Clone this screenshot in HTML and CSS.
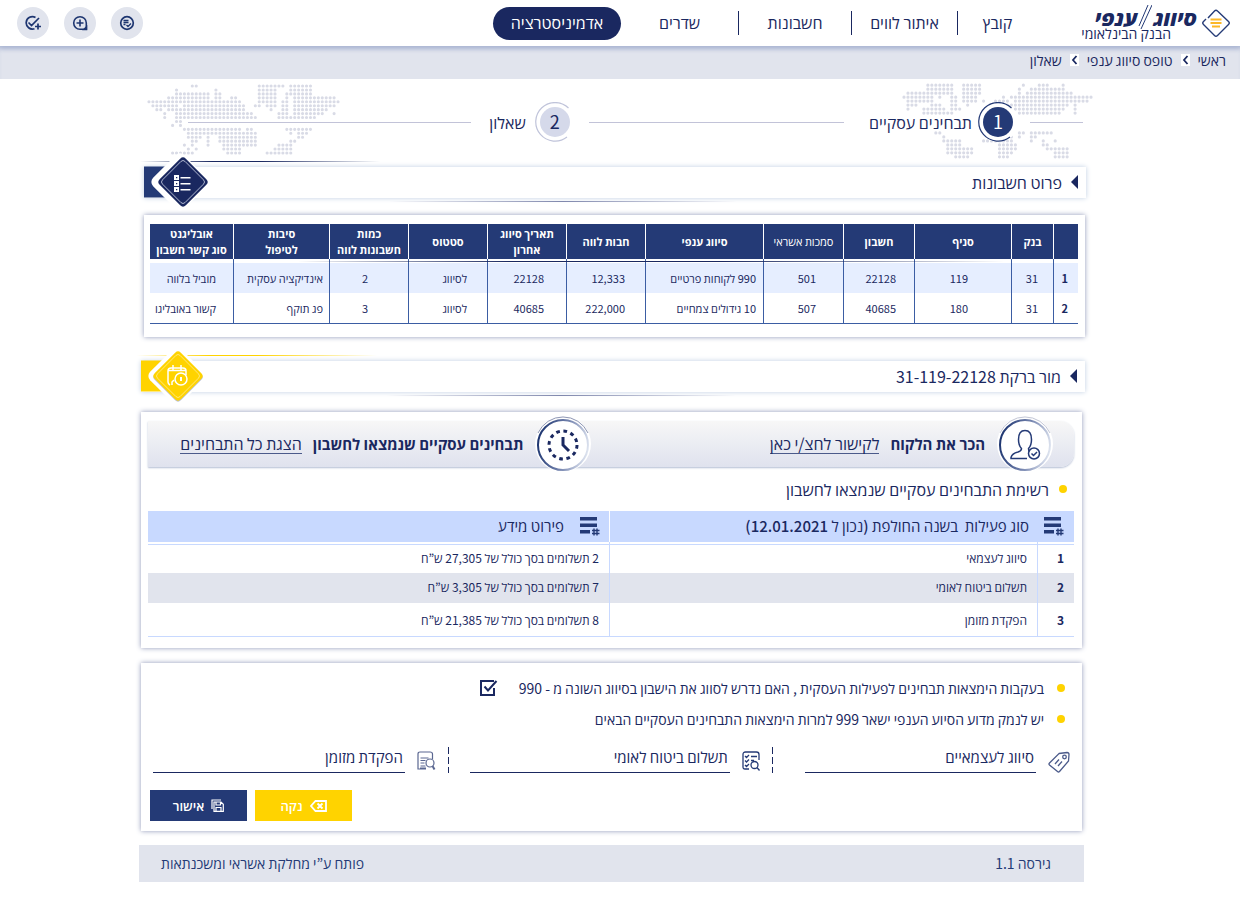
FILE: index.html
```html
<!DOCTYPE html>
<html lang="he" dir="rtl">
<head>
<meta charset="utf-8">
<meta name="viewport" content="width=device-width, initial-scale=1">
<title>סיווג ענפי</title>
<link rel="stylesheet" href="styles.css">
</head>
<body>
<header class="topbar">
  <div class="brand">
    <svg class="brand-mark" width="28" height="30" viewBox="0 0 28 30" fill="none" stroke="#243a76" stroke-width="1.4">
      <path d="M6 10 L12.5 3 Q14 1.500 15.500 3 L26.500 13.500 Q28 15 26.500 16.500 L15.500 27.500 Q14 29 12.500 27.500 L1.500 16.500 Q0 15 1.500 13.500 L4 11"/>
      <path stroke="#fcb827" stroke-width="1.800" d="M8.500 11.500h11M8.500 15h11M10 18.500h8"/>
    </svg>
    <div class="brand-text">
      <div class="brand-name"><span>סיווג</span><svg class="brand-slash" width="14" height="26" viewBox="0 0 14 26" stroke="#243a76" stroke-width="1" fill="none"><path d="M10 1L1 22M14 1L3 25"/></svg><span>ענפי</span></div>
      <div class="brand-sub">הבנק הבינלאומי</div>
    </div>
  </div>
  <nav class="menu">
    <a href="#">קובץ</a>
    <a href="#">איתור לווים</a>
    <a href="#">חשבונות</a>
    <a href="#">שדרים</a>
    <a href="#" class="active">אדמיניסטרציה</a>
  </nav>
  <div class="tools">
    <button type="button" aria-label="רשימה"><svg width="16" height="16" viewBox="0 0 16 16" fill="none" stroke="#1d3570" stroke-width="1.700"><circle cx="8" cy="8" r="6.300"/><path stroke-width="1.300" d="M4.500 5.500h5M4.500 7.500h5M4.500 9.500h2M7.500 10l1.500 1.500 3-3"/></svg></button>
    <button type="button" aria-label="הוספה"><svg width="16" height="16" viewBox="0 0 16 16" fill="none" stroke="#1d3570" stroke-width="1.600"><path d="M8 1.700a6.300 6.300 0 1 0 0 12.600h6.300V8A6.300 6.300 0 0 0 8 1.700zM8 4.500v7M4.500 8h7"/><path d="M14.500 12v2.500H12z" fill="#1d3570"/></svg></button>
    <button type="button" aria-label="אישור והוספה"><svg width="18" height="16" viewBox="0 0 18 16" fill="none" stroke="#1d3570" stroke-width="1.700"><path d="M11.500 2.500A6.200 6.200 0 1 0 10.500 13.700M4.500 7.500L7.500 10.500L15 3M14 8.500v6M11 11.500h6"/></svg></button>
  </div>
</header>
<nav class="crumbs" aria-label="נתיב">
  <a href="#">ראשי</a>
  <svg width="9" height="12" viewBox="0 0 9 12"><path fill="#fff" d="M0 0h9v12H0z"/><path fill="none" stroke="#1a2860" stroke-width="1.800" d="M6.500 2L3 6l3.500 4"/></svg>
  <a href="#">טופס סיווג ענפי</a>
  <svg width="9" height="12" viewBox="0 0 9 12"><path fill="#fff" d="M0 0h9v12H0z"/><path fill="none" stroke="#1a2860" stroke-width="1.800" d="M6.500 2L3 6l3.500 4"/></svg>
  <span>שאלון</span>
</nav>

<main class="page">
  <div class="steps">
    <svg class="map map-right" viewBox="-.5 -.5 48 19" width="191" height="76"><path d="M6 0h6.100M15 0h4.100M30 0h.1M34 0h2.100M40 0h.1M6 1h6.100M15 1h4.100M29 1h.1M32 1h8.100M1 2h11.100M15 2h4.100M29 2h.1M31 2h11.100M0 3h7.100M9 3h.1M12 3h1.100M15 3h3.100M25 3h.1M27 3h20.100M1 4h6.100M12 4h1.100M15 4h3.100M20 4h.1M23 4h3.100M28 4h18.100M1 5h2.100M7 5h2.100M12 5h1.100M16 5h.1M24 5h17.100M43 5h.1M1 6h.1M5 6h5.100M12 6h2.100M28 6h12.100M43 6h.1M5 7h7.100M29 7h10.100M43 7h.1M8 12h1.100M29 12h1.100M32 12h5.100M10 13h.1M27 13h.1M29 13h.1M32 13h1.100M10 14h4.100M20 14h7.100M32 14h.1M35 14h.1M38 14h.1M11 15h3.100M24 15h4.100M35 15h1.100M11 16h6.100M24 16h4.100M36 16h5.100M11 17h6.100M24 17h3.100M38 17h3.100M13 18h3.100M24 18h2.100M38 18h3.100"/></svg>
    <svg class="map map-left" viewBox="-.5 -.5 49 18" width="193" height="71"><path d="M11 0h1.100M28 0h6.100M36 0h5.100M7 1h.1M17 1h.1M28 1h4.100M36 1h5.100M7 2h8.100M17 2h1.100M28 2h4.100M35 2h6.100M5 3h10.100M17 3h1.100M21 3h1.100M28 3h4.100M35 3h.1M37 3h10.100M0 4h23.100M28 4h4.100M34 4h1.100M37 4h11.100M1 5h6.100M9 5h15.100M27 5h1.100M30 5h2.100M34 5h1.100M37 5h10.100M2 6h1.100M5 6h19.100M31 6h.1M34 6h1.100M37 6h8.100M4 7h.1M7 7h18.100M26 7h.1M33 7h2.100M37 7h7.100M47 7h.1M4 8h.1M7 8h20.100M33 8h9.100M7 9h1.100M6 10h.1M8 10h.1M9 11h14.100M25 11h1.100M35 11h6.100M10 12h7.100M18 12h9.100M36 12h.1M38 12h2.100M10 13h3.100M15 13h.1M18 13h9.100M38 13h1.100M11 14h1.100M15 14h.1M18 14h9.100M36 14h1.100M9 15h.1M11 15h.1M15 15h.1M19 15h8.100M33 15h3.100M10 16h.1M12 16h.1M19 16h4.100M32 16h4.100M6 17h5.100M20 17h3.100M30 17h6.100"/></svg>
    <span class="rule rule-start"></span>
    <span class="step-ring step-on"><svg width="40" height="40" viewBox="0 0 40 40" fill="none"><circle cx="20" cy="20" r="20" fill="#fff"/><circle cx="20" cy="20" r="15" fill="#243a76"/><path stroke="#243a76" stroke-width="1.200" d="M33.500 6A19.300 19.300 0 1 0 32 35"/></svg><b>1</b></span>
    <span class="step-label">תבחינים עסקיים</span>
    <span class="rule rule-mid"></span>
    <span class="step-ring"><svg width="40" height="40" viewBox="0 0 40 40" fill="none"><circle cx="20" cy="20" r="15" fill="#d5d9ea"/><path stroke="#c0c4da" stroke-width="1.200" d="M33.500 6A19.300 19.300 0 1 0 32 35"/></svg><b>2</b></span>
    <span class="step-label second">שאלון</span>
    <span class="rule rule-end"></span>
  </div>

  <section class="accounts">
    <h2 class="section-bar">
      <span class="arrow"></span>פרוט חשבונות
      <svg class="emblem" width="70" height="64" viewBox="0 0 70 64" fill="none">
        <path fill="#243a76" d="M0 16.500h36v31H0z"/>
        <rect x="14" y="10" width="44" height="44" rx="6" fill="#fff" transform="rotate(45 36 32)"/>
        <rect x="20.500" y="13.500" width="37" height="37" rx="4" fill="#1a2860" transform="rotate(45 39 32)"/>
        <rect x="23" y="16" width="32" height="32" rx="3" stroke="#c9cfe2" stroke-width=".8" transform="rotate(45 39 32)"/>
        <path fill="#fff" d="M30 25h5v5h-5zM30 31h5v5h-5zM30 37h5v5h-5zM36.500 27h10v1.600h-10zM36.500 33h10v1.600h-10zM36.500 39h10v1.600h-10z"/>
        <path fill="#1a2860" d="M32 27h1.300v1.300H32zM32 33h1.300v1.300H32zM32 39h1.300v1.300H32z"/>
      </svg>
    </h2>
    <div class="card card-accounts">
      <div class="table-wrap">
      <table class="grid">
        <colgroup><col class="w25"><col class="w42"><col class="w97"><col class="w71"><col class="w80"><col class="w118"><col class="w79"><col class="w79"><col class="w79"><col class="w79"><col class="w96"><col class="w83"></colgroup>
        <thead><tr><th></th><th>בנק</th><th>סניף</th><th>חשבון</th><th>סמכות אשראי</th><th>סיווג ענפי</th><th>חבות לווה</th><th>תאריך סיווג<br>אחרון</th><th>סטטוס</th><th>כמות<br>חשבונות לווה</th><th>סיבות<br>לטיפול</th><th>אובליגנט<br>סוג קשר חשבון</th></tr></thead>
        <tbody>
          <tr><th scope="row">1</th><td>31</td><td>119</td><td>22128</td><td>501</td><td>990 לקוחות פרטיים</td><td>12,333</td><td>22128</td><td>לסיווג</td><td>2</td><td>אינדיקציה עסקית</td><td>מוביל בלווה</td></tr>
          <tr><th scope="row">2</th><td>31</td><td>180</td><td>40685</td><td>507</td><td>10 גידולים צמחיים</td><td>222,000</td><td>40685</td><td>לסיווג</td><td>3</td><td>פג תוקף</td><td>קשור באובליגו</td></tr>
        </tbody>
      </table>
      </div>
    </div>
  </section>

  <section class="customer">
    <h2 class="section-bar gold">
      <span class="arrow"></span>מור ברקת 31-119-22128
      <svg class="emblem" width="70" height="64" viewBox="0 0 70 64" fill="none">
        <path fill="#ffd300" d="M0 16.500h36v31H0z"/>
        <rect x="14" y="10" width="44" height="44" rx="6" fill="#fff" transform="rotate(45 36 32)"/>
        <rect x="18.500" y="14.500" width="37" height="37" rx="4" fill="#b9bfd0" transform="rotate(45 37 33)"/>
        <rect x="18.500" y="13.500" width="37" height="37" rx="4" fill="#ffd300" transform="rotate(45 37 32)"/>
        <rect x="21" y="16" width="32" height="32" rx="3" stroke="#ffeb8a" stroke-width=".8" transform="rotate(45 37 32)"/>
        <g stroke="#fff" stroke-width="1.500"><path d="M27 27q0-3 3-3h12q3 0 3 3v4M27 26.500h18M32 21v5M40 21v5M27 27v11q0 2 2 3M31 41v-3l2-2"/><circle cx="40" cy="35" r="6"/><path stroke-width="2" d="M40 33v4"/></g>
      </svg>
    </h2>
    <div class="card card-tests">
      <div class="links-bar">
        <div class="link-group first">
          <svg class="medal" width="58" height="58" viewBox="0 0 58 58" fill="none">
            <defs><linearGradient id="ring" x1="0" y1=".4" x2="1" y2=".6"><stop offset="0" stop-color="#1d3570"/><stop offset=".5" stop-color="#6f7fab"/><stop offset="1" stop-color="#dde3ef"/></linearGradient></defs>
            <circle cx="29" cy="29" r="28" fill="#fff"/><path stroke="#c3c7d6" d="M4 18A27.500 27.500 0 0 1 54 18"/><circle cx="29" cy="30" r="25" stroke="url(#ring)" stroke-width="2"/>
            <g stroke="#243a76" stroke-width="1.500"><path d="M31 43.500H15v-1q1-4 7-5.500 3.500-1 3.500-3.500-3-3-3-9 0-9 6.500-9t6.500 9q0 6-3 9 0 2 1 3"/><circle cx="38" cy="38.500" r="5.500"/><path d="M35.500 38.500l2 2 3.500-3.500"/></g>
          </svg>
          <strong>הכר את הלקוח</strong><a href="#">לקישור לחצ/י כאן</a>
        </div>
        <div class="link-group">
          <svg class="medal" width="58" height="58" viewBox="0 0 58 58" fill="none">
            <circle cx="29" cy="29" r="28" fill="#fff"/><path stroke="#8f97b4" d="M4 18A27.500 27.500 0 0 1 54 18"/><circle cx="29" cy="30" r="25" stroke="url(#ring)" stroke-width="2"/>
            <circle cx="29" cy="30" r="14" stroke="#1a2860" stroke-width="3" stroke-dasharray="3.700 3.630"/><path stroke="#1a2860" stroke-width="3" d="M29 22v8l6 6"/>
          </svg>
          <strong>תבחינים עסקיים שנמצאו לחשבון</strong><a href="#">הצגת כל התבחינים</a>
        </div>
      </div>
      <h3 class="list-title"><i class="dot"></i>רשימת התבחינים עסקיים שנמצאו לחשבון</h3>
      <table class="tests">
        <colgroup><col class="n"><col class="act"><col class="info"></colgroup>
        <thead><tr>
          <th colspan="2"><span class="th-in"><svg width="20" height="20" viewBox="0 0 20 20" fill="#243a76"><path d="M0 1h17v3.500H0zM0 7.500h17V11H0zM0 14h10v3.500H0z"/><path fill="none" stroke="#243a76" stroke-width="1.400" d="M14 12.500v7M17 12.500v7M12 14.500h7.500M12 17.500h7.500"/></svg>סוג פעילות &nbsp;בשנה החולפת (נכון ל 12.01.2021)</span></th>
          <th><span class="th-in"><svg width="20" height="20" viewBox="0 0 20 20" fill="#243a76"><path d="M0 1h17v3.500H0zM0 7.500h17V11H0zM0 14h10v3.500H0z"/><path fill="none" stroke="#243a76" stroke-width="1.400" d="M14 12.500v7M17 12.500v7M12 14.500h7.500M12 17.500h7.500"/></svg>פירוט מידע</span></th>
        </tr></thead>
        <tbody>
          <tr><th scope="row">1</th><td>סיווג לעצמאי</td><td>2 תשלומים בסך כולל של 27,305 ש”ח</td></tr>
          <tr><th scope="row">2</th><td>תשלום ביטוח לאומי</td><td>7 תשלומים בסך כולל של 3,305 ש”ח</td></tr>
          <tr><th scope="row">3</th><td>הפקדת מזומן</td><td>8 תשלומים בסך כולל של 21,385 ש”ח</td></tr>
        </tbody>
      </table>
    </div>

    <form class="card card-form">
      <div class="question"><i class="dot"></i><label for="reclass">בעקבות הימצאות תבחינים לפעילות העסקית , האם נדרש לסווג את הישבון בסיווג השונה מ - 990</label>
        <span class="check"><input type="checkbox" id="reclass" checked><svg width="18" height="16" viewBox="0 0 18 16" fill="none" stroke="#1a2860" stroke-width="2"><path d="M14 1H1v14h13V8"/><path d="M4.500 6.500L8 10.500L16.500 1"/></svg></span></div>
      <div class="question"><i class="dot"></i><span>יש לנמק מדוע הסיוע הענפי ישאר 999 למרות הימצאות התבחינים העסקיים הבאים</span></div>
      <div class="fields">
        <svg width="22" height="22" viewBox="0 0 22 22" fill="none" stroke="#4b5a8a" stroke-width="1.300"><path d="M11 2.500L19 1.500Q21 1.500 21 3.500L20.500 10L11.500 20.500Q10.500 21.500 9.500 20.500L1.500 14Q.5 13 1.500 12Z"/><circle cx="16.500" cy="6" r="1.800"/><path d="M7 13l4-4.500M10 15l4-4.500"/></svg>
        <input class="f1" type="text" aria-label="סיווג לעצמאיים" value="סיווג לעצמאיים">
        <span class="dash d1"></span>
        <svg class="raised" width="18" height="20" viewBox="0 0 18 20" fill="none" stroke="#243a76" stroke-width="1.300"><path d="M7 18H3Q1 18 1 16V3.500Q1 1 3.500 1H14.500Q17 1 17 3.500V9M3 5l1.500 1.500L7 4M9 5.500h6M3 9.500L4.500 11L7 8.500M9 9.500h3M3 14l1.500 1.500L7 13"/><circle cx="12.500" cy="14" r="3.500"/><path d="M15 16.500l2.500 3"/></svg>
        <input class="f2" type="text" aria-label="תשלום ביטוח לאומי" value="תשלום ביטוח לאומי">
        <span class="dash d2"></span>
        <svg class="raised" width="19" height="20" viewBox="0 0 19 20" fill="none" stroke="#5a6791" stroke-width="1.200"><path d="M9 18H1V3Q1 1 3 1H13Q15.500 1 15.500 3V8M3.500 7h8M3.500 9.500h5M3.500 12h4M3.500 15h5M3 17h6"/><circle cx="13" cy="12" r="4"/><path stroke-width="2" d="M15.500 15l2 3.500"/></svg>
        <input class="f3" type="text" aria-label="הפקדת מזומן" value="הפקדת מזומן">
      </div>
      <div class="actions">
        <button type="reset" class="btn btn-clear"><svg width="17" height="12" viewBox="0 0 17 12" fill="none" stroke="#fff" stroke-width="1.800"><path d="M5.500 1H16v10H5.500L1 6zM7.500 3.500l5 5M12.500 3.500l-5 5"/></svg>נקה</button>
        <button type="button" class="btn btn-ok"><svg width="13" height="13" viewBox="0 0 13 13" fill="none" stroke="#fff" stroke-width="1.200"><path d="M1 10V1h9M3 3h7l2.300 2.300V12.300H3zM5 3v3h4.500V3M5 12V8.500h5V12"/></svg>אישור</button>
      </div>
    </form>
  </section>

  <footer class="foot"><span>גירסה 1.1</span><span>פותח ע”י מחלקת אשראי ומשכנתאות</span></footer>
</main>
</body>
</html>
```
FILE: styles.css
```css
* { box-sizing: border-box; }
body {
  margin: 0;
  background: #fff;
  color: #1a2860;
  font: 14px/20px "Noto Sans CJK KR", "Open Sans", sans-serif;
}
a { color: inherit; text-decoration: none; }
svg { display: block; flex: none; }
h2, h3 { margin: 0; font-weight: 400; }
button, input { font: inherit; color: inherit; }

.topbar {
  position: relative;
  display: flex;
  align-items: center;
  height: 46px;
  padding: 0 10px 0 17px;
  background: #fff;
  box-shadow: 0 2px 5px #a9b4d2;
}
.brand { display: flex; align-items: center; gap: 5px; width: 193px; }
.brand-name { display: flex; align-items: center; height: 20px; font-size: 21px; line-height: 20px; font-weight: 800; font-style: italic; }
.brand-slash { margin: 0 1px; }
.brand-sub { padding-inline-start: 26px; line-height: 12px; }
.menu {
  display: grid;
  grid-template-columns: 80px 106px 113px 117px 128px;
  align-items: center;
  font-size: 16px;
  text-align: center;
}
.menu a { line-height: 22px; padding-bottom: 2px; border-inline-end: 1px solid #1a2860; }
.menu a:nth-child(4) { padding-right: 0; padding-left: 0; }
.menu a:nth-child(4), .menu a.active { border: 0; }
.menu .active { line-height: 31px; border-radius: 17px; background: #1a2860; color: #fff; }
.tools { display: flex; gap: 15px; margin-inline-start: auto; }
.tools button {
  display: grid;
  place-items: center;
  width: 32px;
  height: 32px;
  padding: 0;
  border: 0;
  border-radius: 50%;
  background: #e1e4ed;
}

.crumbs {
  display: flex;
  align-items: center;
  gap: 8px;
  height: 33px;
  padding: 0 14px 5px;
  background: #e1e4ed;
  box-shadow: inset 0 5px 5px -3px #b4bed8;
}

.page { margin: 0 155px 0 141px; }
.steps {
  position: relative;
  display: flex;
  align-items: center;
  height: 86px;
  margin-bottom: 2px;
  padding: 0 2px 0 47px;
}
.map { position: absolute; z-index: -1; }
.map path { fill: none; stroke: #d9dbe6; stroke-width: .8; stroke-linecap: round; stroke-dasharray: 0 1; }
.map-right { right: -8px; top: 4px; }
.map-left { left: 6px; top: 5px; }
.rule { height: 1px; background: #c2c3d8; }
.rule-start { width: 53px; margin-left: 12px; }
.rule-mid { flex: 256; margin: 0 25px 0 14px; }
.rule-end { flex: 284; margin-right: 18px; }
.step-ring { display: grid; place-items: center; }
.step-ring > * { grid-area: 1 / 1; }
.step-ring b { padding-bottom: 2px; font-size: 18px; font-weight: 400; }
.step-on b { color: #fff; }
.step-label { margin-right: 6px; font-size: 16px; }
.step-label.second { margin-right: 9px; }

.accounts { margin: 0 -1px 0 3px; }
.section-bar {
  position: relative;
  display: flex;
  align-items: center;
  gap: 9px;
  height: 31px;
  padding: 0 8px 2px;
  font-size: 16px;
  background: #fff;
  box-shadow: 0 0 5px #bfcfe2;
}
.section-bar::before, .section-bar::after { content: ""; position: absolute; height: 1px; }
.section-bar::before { left: -4px; top: -6px; width: 240px; background: linear-gradient(90deg, transparent, #1a2860 30%, #1a2860 50%, transparent); }
.section-bar::after { left: 26%; bottom: -4px; width: 37%; background: linear-gradient(90deg, transparent, #8088ad 50%, transparent); }
.section-bar.gold::before { background: linear-gradient(90deg, transparent, #ffd300 30%, #ffd300 50%, transparent); }
.arrow { border: solid transparent; border-width: 7px 0; border-right: 7px solid #1a2860; }
.emblem { position: absolute; z-index: 1; left: 0; top: -17px; }

.card { background: #fff; box-shadow: 0 0 5px #9098b8; }
.card-accounts { margin: 17px 1px 0 0; padding: 9px 7px 13px 6px; }
.table-wrap { position: relative; }
.table-wrap::after {
  content: "";
  position: absolute;
  left: 16%;
  right: 8%;
  top: 37px;
  height: 1px;
  background: linear-gradient(90deg, transparent, #1a2860 30%, #1a2860 60%, transparent);
}
table { width: 100%; table-layout: fixed; border-collapse: separate; border-spacing: 0; }
th, td { padding: 0; white-space: nowrap; }
.grid { font-size: 11px; border-bottom: 1px solid #3b5da3; }
.w25 { width: 25px; } .w42 { width: 42px; } .w97 { width: 97px; } .w71 { width: 71px; }
.w80 { width: 80px; } .w118 { width: 118px; } .w79 { width: 79px; } .w96 { width: 96px; } .w83 { width: 83px; }
.grid thead th { height: 35px; padding-bottom: 2px; line-height: 16px; background: #243a76; color: #fff; border-left: 1px solid #fff; }
.grid thead th:nth-child(5) { font-weight: 400; }
.grid tbody th, .grid tbody td { height: 30px; text-align: start; border-left: 1px solid #3b5da3; }
.grid tbody tr:first-child > * { height: 34px; padding-top: 4px; background: linear-gradient(#fff 4px, #e6eeff 4px); }
.grid tr > :last-child { border-left: 0 !important; }
.grid tbody > tr > :nth-child(1) { padding-right: 10px; }
.grid tbody > tr > :nth-child(2) { padding-right: 15px; }
.grid tbody > tr > :nth-child(3) { padding-right: 43px; }
.grid tbody > tr > :nth-child(4) { padding-right: 18px; }
.grid tbody > tr > :nth-child(5) { padding-right: 27px; }
.grid tbody > tr > :nth-child(6) { padding-right: 7px; }
.grid tbody > tr > :nth-child(7) { padding-right: 20px; }
.grid tbody > tr > :nth-child(8) { padding-right: 22px; }
.grid tbody > tr > :nth-child(9) { padding-right: 20px; }
.grid tbody > tr > :nth-child(10) { padding-right: 40px; }
.grid tbody > tr > :nth-child(11) { padding-right: 6px; }
.grid tbody > tr > :nth-child(12) { padding-right: 17px; }

.customer { margin-top: 24px; }
.card-tests { margin: 20px 3px 0 0; padding: 9px 8px 11px 7px; }
.links-bar {
  display: flex;
  height: 46px;
  border-radius: 0 14px 14px 0;
  background: linear-gradient(#f7f7f7, #dfe2ee);
  box-shadow: 0 1px 2px #b4bed4;
  font-size: 16px;
}
.link-group { display: flex; align-items: center; gap: 11px; }
.link-group.first { width: 52%; padding-right: 20px; }
.link-group strong { font-size: 15px; }
.link-group a { border-bottom: 1px solid #4b5a8a; line-height: 19px; }
.medal { margin: -6px 0; }
.list-title { display: flex; align-items: center; gap: 10px; height: 44px; padding-right: 7px; font-size: 16px; }
.dot { width: 8px; height: 8px; border-radius: 50%; background: #ffd300; }

.tests { font-size: 12px; border-bottom: 1px solid #c8d9ff; }
.tests .n { width: 37px; } .tests .act { width: 428px; } .tests .info { width: 461px; }
.tests th { text-align: start; }
.tests thead th { height: 31px; background: #c8d9ff; font-size: 15px; font-weight: 500; }
.tests thead th:first-child { border-left: 1px solid #fff; }
.th-in { display: flex; align-items: center; gap: 15px; padding: 0 10px 1px 0; }
.tests thead th:last-child .th-in { padding-right: 9px; gap: 16px; }
.tests tbody th, .tests tbody td { border-left: 1px solid #c8d9ff; padding-right: 10px; height: 31px; }
.tests tbody td:last-child { border-left: 0; }
.tests tbody tr:first-child > * { background: linear-gradient(#fff 2px, #c8d9ff 2px 3px, #fff 3px); }
.tests tbody tr:nth-child(2) > * { height: 30px; padding-bottom: 2px; background: #e1e4ed; }
.tests tbody tr:nth-child(3) > * { height: 33px; }

.card-form { margin: 15px 3px 0 0; padding: 9px 12px 10px 9px; }
.question { display: flex; align-items: center; gap: 13px; height: 31px; padding-right: 5px; }
.check { position: relative; margin-right: 8px; }
.check input { position: absolute; inset: 0; width: 18px; height: 16px; margin: 0; opacity: 0; }
.fields { display: flex; align-items: flex-end; gap: 12px; margin: 10px 0 17px; padding-left: 3px; }
.fields input { min-width: 0; height: 29px; padding: 0 2px 3px; border: 0; border-bottom: 1px solid #1a2860; background: none; font-size: 15px; outline: 0; }
.raised { margin-bottom: 2px; }
.f1 { flex: 230; } .f2 { flex: 259; } .f3 { flex: 251; }
.dash { width: 1px; height: 26px; background: repeating-linear-gradient(#1a2860 0 7px, transparent 7px 10px); }
.d1 { margin-right: 20px; } .d2 { margin-right: 9px; }
.actions { display: flex; justify-content: flex-end; gap: 8px; }
.btn { display: flex; align-items: center; justify-content: center; gap: 7px; width: 97px; height: 31px; border: 0; color: #fff; font-size: 13px; font-weight: 600; }
.btn-clear { background: #ffd300; }
.btn-ok { background: #243a76; }

.foot {
  display: flex;
  align-items: center;
  justify-content: space-between;
  margin: 14px 1px 26px -2px;
  height: 37px;
  padding: 0 33px 1px 22px;
  background: #e1e4ed;
  color: #243a76;
}
```
